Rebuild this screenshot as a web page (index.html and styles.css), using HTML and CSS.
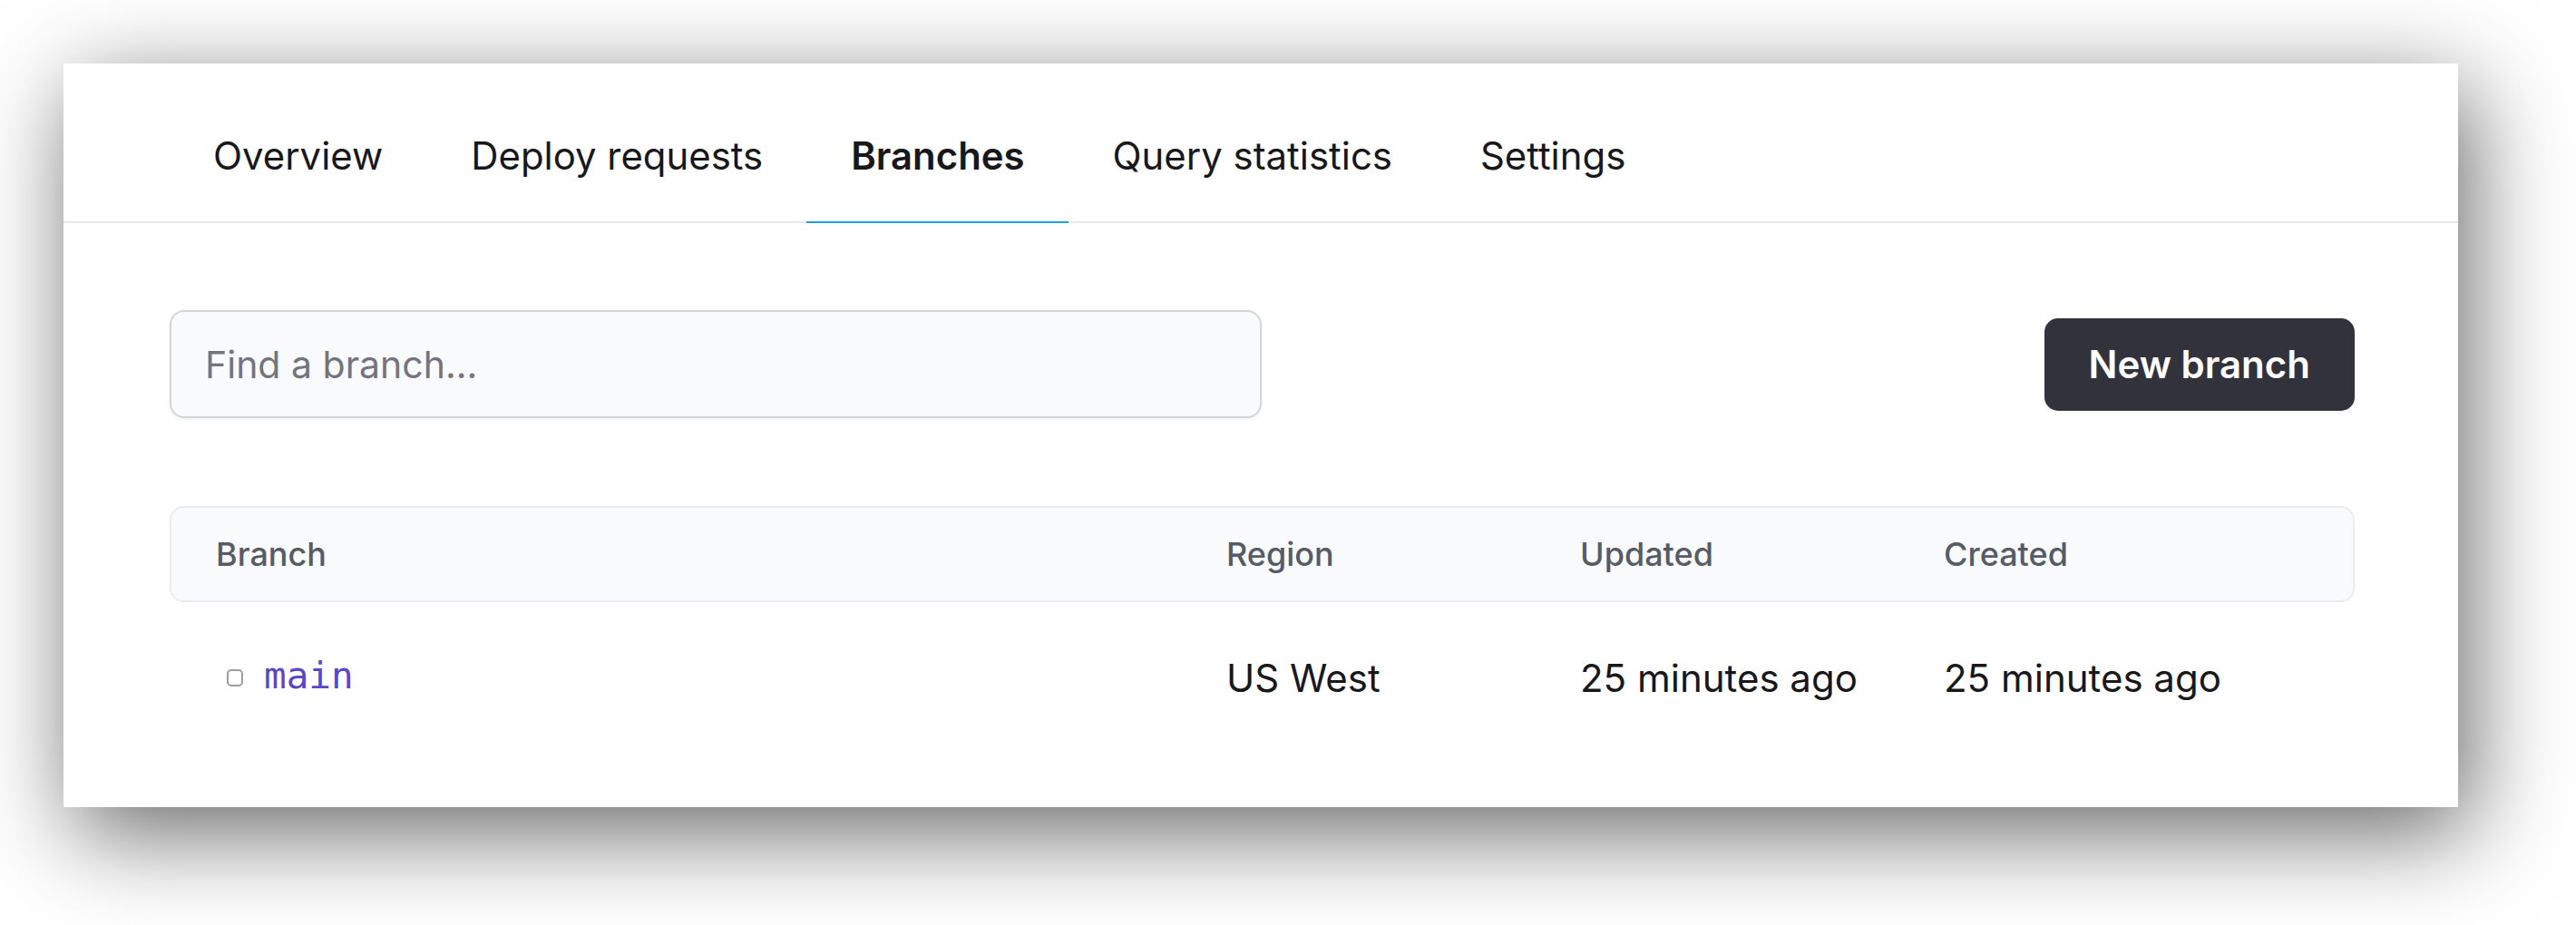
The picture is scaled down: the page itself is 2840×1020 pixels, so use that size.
FILE: index.html
```html
<!DOCTYPE html>
<html lang="en">
<head>
<meta charset="utf-8">
<title>Branches</title>
<link rel="stylesheet" href="styles.css">
</head>
<body>
  <main class="card">
    <nav class="tabs">
      <a class="tab">Overview</a>
      <a class="tab">Deploy requests</a>
      <a class="tab tab-active">Branches</a>
      <a class="tab">Query statistics</a>
      <a class="tab">Settings</a>
    </nav>
    <section class="content">
      <div class="toolbar">
        <input class="search" type="text" placeholder="Find a branch...">
        <button class="btn-primary" type="button">New branch</button>
      </div>
      <div class="table">
        <div class="thead">
          <div class="cell">Branch</div>
          <div class="cell">Region</div>
          <div class="cell">Updated</div>
          <div class="cell">Created</div>
        </div>
        <div class="row">
          <div class="cell branch-cell"><span class="branch-icon"></span><span class="branch-name">main</span></div>
          <div class="cell">US West</div>
          <div class="cell">25 minutes ago</div>
          <div class="cell">25 minutes ago</div>
        </div>
      </div>
    </section>
  </main>
</body>
</html>
```
FILE: styles.css
```css
* { box-sizing: border-box; }

html, body {
  margin: 0;
  background: #ffffff;
}

body {
  padding: 70px 70px 130px 70px;
  min-height: 1020px;
  font-family: "Inter", "Noto Sans", sans-serif;
  color: #18181b;
}

.card {
  width: 2640px;
  height: 820px;
  background: #ffffff;
  box-shadow: 12px 28px 100px 0 rgba(0, 0, 0, 0.6);
  overflow: hidden;
}

.tabs {
  display: flex;
  padding: 60px 116px 0 116px;
  border-bottom: 2px solid #e7e9ee;
}

.tab {
  display: block;
  padding: 0 48px 30px 49px;
  font-size: 41.9px;
  line-height: 84px;
  font-weight: 400;
  color: #18181b;
  margin-bottom: -2px;
  border-bottom: 2px solid transparent;
  white-space: nowrap;
}

.tab-active {
  font-weight: 600;
  border-bottom-color: #219ee3;
}

.content {
  padding: 96px 114px 0 117px;
}

.toolbar {
  display: flex;
  align-items: center;
  justify-content: space-between;
}

.search {
  width: 1204px;
  height: 119px;
  padding: 0 0 0 37px;
  border: 2px solid #d4d5da;
  border-radius: 16px;
  background: #f9fafb;
  font-family: "Inter", "Noto Sans", sans-serif;
  font-size: 41px;
  color: #18181b;
  box-shadow: 0 2px 4px rgba(0, 0, 0, 0.05);
  outline: none;
}

.search::placeholder {
  color: #74747e;
}

.btn-primary {
  height: 102px;
  padding: 0 49px;
  border: 0;
  border-radius: 15px;
  background: #32323c;
  color: #ffffff;
  font-family: "Inter", "Noto Sans", sans-serif;
  font-size: 42px;
  font-weight: 600;
}

.table {
  margin-top: 97px;
}

.thead,
.row {
  display: grid;
  grid-template-columns: 1113px 390px 401px 1fr;
  align-items: center;
}

.thead {
  height: 106px;
  border: 2px solid #eaecef;
  border-radius: 15px;
  background: #f9fafb;
  font-size: 36px;
  font-weight: 500;
  color: #575b65;
}

.row {
  height: 166px;
  padding: 0 2px;
  font-size: 42px;
  color: #18181b;
}

.cell {
  padding-left: 50px;
  white-space: nowrap;
}

.thead .cell:first-child {
  padding-left: 49px;
}

.branch-cell {
  display: flex;
  align-items: center;
  padding-left: 61px;
}

.branch-icon {
  width: 18px;
  height: 19px;
  border: 2px solid #9b9da3;
  border-radius: 5px;
  margin-right: 23px;
}

.branch-name {
  font-family: "DejaVu Sans Mono", "Liberation Mono", monospace;
  font-size: 41px;
  color: #5b47c4;
  line-height: 1;
  position: relative;
  top: -2px;
}
```
